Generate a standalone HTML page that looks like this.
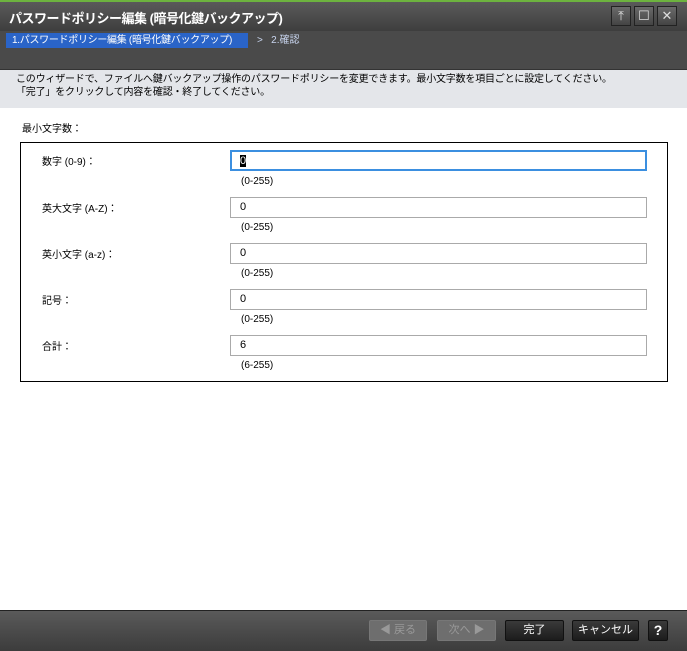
<!DOCTYPE html>
<html><head><meta charset="utf-8"><style>
*{margin:0;padding:0;box-sizing:border-box}
body{width:687px;height:651px;position:relative;font-family:"Liberation Sans","Noto Sans CJK JP",sans-serif;font-size:10px;color:#000;background:#fff;overflow:hidden}
.abs{position:absolute;white-space:nowrap}
.title{left:0;top:0;width:687px;height:31px;background:linear-gradient(#5a5a5a,#3e3e3e);border-top:2px solid #6db33f}
.title span{position:absolute;left:9px;top:6px;color:#fff;font-size:13px;font-weight:bold;letter-spacing:-0.5px}
.wb{top:6px;width:20px;height:20px;border:1px solid #222;background:linear-gradient(#6a6a6a,#444);color:#ddd;font-size:13px;text-align:center;line-height:18px}
.steps{left:0;top:31px;width:687px;height:38px;background:#4a4a4a}
.desc{left:0;top:69px;width:687px;height:39px;background:#e4e6ea;border-top:1px solid #333}
.inp{left:230px;width:417px;height:21px;border:1px solid #aaa;background:#fff;padding-left:9px;line-height:19px;font-size:11px}
.lbl{left:42px;font-size:10px}
.hint{left:241px;font-size:10px}
.foot{left:0;top:610px;width:687px;height:41px;background:linear-gradient(#5a5a5a,#3c3c3c);border-top:1px solid #222}
.btn{top:620px;height:21px;border:1px solid #111;background:linear-gradient(#3a3a3a,#1c1c1c);color:#fff;text-align:center;line-height:19px;font-size:11px;border-radius:2px}
.dis{background:#6e6e6e;border-color:#777;color:#999}
</style></head><body>
<div class="abs title"><span>パスワードポリシー編集 (暗号化鍵バックアップ)</span></div>
<div class="abs wb" style="left:611px">⤒</div>
<div class="abs wb" style="left:634px">☐</div>
<div class="abs wb" style="left:657px">✕</div>
<div class="abs steps"></div>
<div class="abs" style="left:6px;top:33px;width:242px;height:15px;background:#2a64c8;color:#fff;padding-left:6px;line-height:15px;letter-spacing:-0.3px">1.パスワードポリシー編集 (暗号化鍵バックアップ)</div>
<div class="abs" style="left:257px;top:33px;color:#c8d4ee;line-height:15px">&gt;&nbsp;&nbsp; 2.確認</div>
<div class="abs desc"><div style="position:absolute;left:16px;top:3px;line-height:13px;letter-spacing:-0.2px">このウィザードで、ファイルへ鍵バックアップ操作のパスワードポリシーを変更できます。最小文字数を項目ごとに設定してください。<br>「完了」をクリックして内容を確認・終了してください。</div></div>
<div class="abs" style="left:22px;top:120px">最小文字数：</div>
<div class="abs" style="left:20px;top:142px;width:648px;height:240px;border:1px solid #000"></div>
<div class="abs lbl" style="top:153px">数字 (0-9)：</div>
<div class="abs inp" style="top:150px;border:2px solid #3b8fe0;padding-left:8px"><span style="background:#000;color:#fff">0</span></div>
<div class="abs hint" style="top:176px">(0-255)</div>
<div class="abs lbl" style="top:200px">英大文字 (A-Z)：</div>
<div class="abs inp" style="top:197px">0</div>
<div class="abs hint" style="top:222px">(0-255)</div>
<div class="abs lbl" style="top:246px">英小文字 (a-z)：</div>
<div class="abs inp" style="top:243px">0</div>
<div class="abs hint" style="top:268px">(0-255)</div>
<div class="abs lbl" style="top:292px">記号：</div>
<div class="abs inp" style="top:289px">0</div>
<div class="abs hint" style="top:314px">(0-255)</div>
<div class="abs lbl" style="top:338px">合計：</div>
<div class="abs inp" style="top:335px">6</div>
<div class="abs hint" style="top:360px">(6-255)</div>
<div class="abs foot"></div>
<div class="abs btn dis" style="left:369px;width:58px">◀ 戻る</div>
<div class="abs btn dis" style="left:437px;width:59px">次へ ▶</div>
<div class="abs btn" style="left:505px;width:59px">完了</div>
<div class="abs btn" style="left:572px;width:67px">キャンセル</div>
<div class="abs btn" style="left:648px;width:20px;font-weight:bold;font-size:14px">?</div>
</body></html>
